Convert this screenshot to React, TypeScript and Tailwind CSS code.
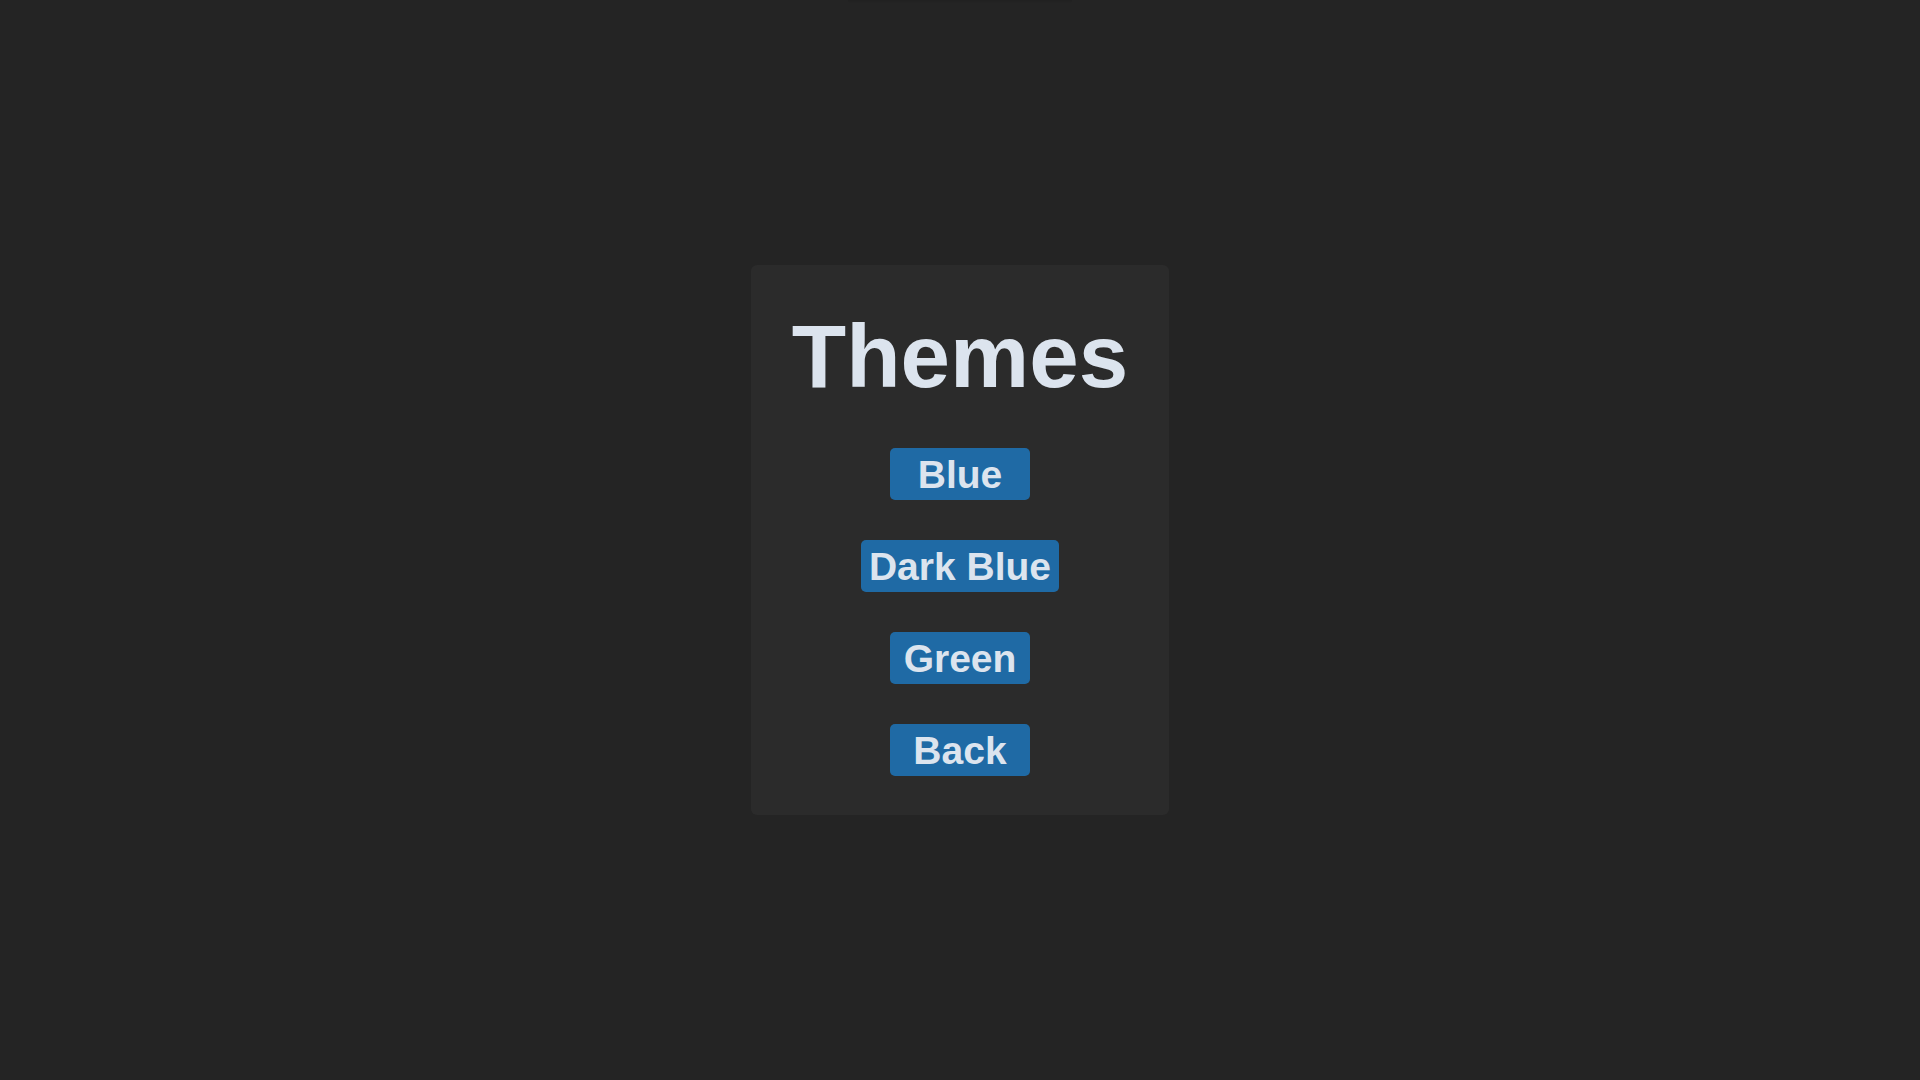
const themes = ["Blue", "Dark Blue", "Green"];

function MenuButton({ label }: { label: string }) {
  return (
    <button
      type="button"
      className="h-[52px] min-w-[140px] rounded-[5px] bg-[#1f6aa5] px-2 text-[39px] leading-none font-bold text-[#dce4ee] hover:bg-[#144870]"
    >
      {label}
    </button>
  );
}

export default function App() {
  return (
    <main className="relative flex min-h-screen items-center justify-center bg-[#242424] font-['Liberation_Sans',Arial,sans-serif]">
      {/* faint shade along the top edge of the window */}
      <div className="absolute inset-x-0 top-0 mx-auto h-1 w-56 rounded-b-full bg-linear-to-b from-black/10 to-transparent" />
      <section className="flex flex-col items-center gap-10 rounded-md bg-[#2b2b2b] px-[41px] py-[39px]">
        <h1 className="text-[89px] leading-[104px] font-bold text-[#dce4ee]">Themes</h1>
        {themes.map((name) => (
          <MenuButton key={name} label={name} />
        ))}
        <MenuButton label="Back" />
      </section>
    </main>
  );
}
